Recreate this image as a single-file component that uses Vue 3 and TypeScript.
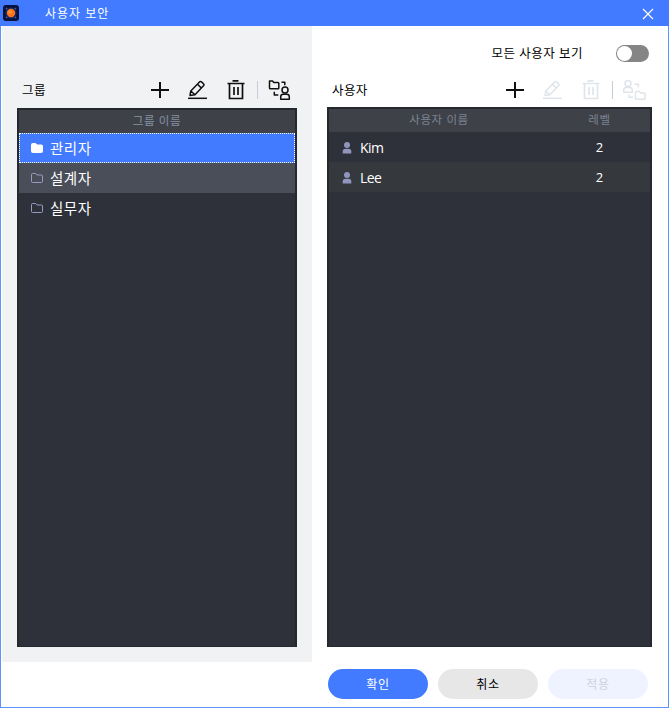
<script setup lang="ts">
import { ref } from 'vue'

interface Group { name: string; state: 'selected' | 'hover' | 'normal' }
interface User { name: string; level: number }

const groups: Group[] = [
  { name: '관리자', state: 'selected' },
  { name: '설계자', state: 'hover' },
  { name: '실무자', state: 'normal' },
]
const users: User[] = [
  { name: 'Kim', level: 2 },
  { name: 'Lee', level: 2 },
]
const showAll = ref(false)
</script>

<template>
  <svg class="defs" width="0" height="0">
    <symbol id="plus" viewBox="0 0 24 24">
      <path d="M12 4v16M3 12h18" fill="none" stroke="currentColor" stroke-width="2" />
    </symbol>
    <symbol id="pencil" viewBox="0 0 24 24">
      <g fill="none" stroke="currentColor" stroke-width="1.5" stroke-linejoin="round">
        <path d="M4 17.500l.8-4.500L13.500 3.900q1-1 2 0l2 1.900q1 1 0 2L9 16.700zM11.500 6.300l4 3.800M4.800 13L9 16.700" />
        <path d="M2 20.300h19" />
      </g>
    </symbol>
    <symbol id="trash" viewBox="0 0 24 24">
      <g fill="none" stroke="currentColor" stroke-width="1.700">
        <path d="M3.500 5.500h17M8.500 2.800h6M5.500 5.500v15h13v-15M10 9v8M14 9v8" />
      </g>
    </symbol>
    <symbol id="folder" viewBox="0 0 14 12">
      <path d="M2.500 1.500h3.200l1.300 1.500h4.500q1 0 1 1v5.500q0 1-1 1h-9q-1 0-1-1v-7q0-1 1-1z" stroke="currentColor" stroke-width="1" />
    </symbol>
  </svg>

  <div class="window">
    <header class="titlebar">
      <svg class="logo" viewBox="0 0 16 16">
        <rect width="16" height="16" rx="3" fill="#07123f" />
        <path d="M3 3l10 10M13 3L3 13" stroke="#4b5b91" stroke-width="1.500" />
        <circle cx="8" cy="8" r="5.500" fill="#152966" />
        <circle cx="8" cy="8" r="4.200" fill="#ff711b" />
        <circle cx="7.200" cy="7" r="2" fill="#ff922e" />
      </svg>
      <h1>사용자 보안</h1>
      <svg class="close" viewBox="0 0 12 12"><path d="M1 1l10 10M11 1L1 11" stroke="#fff" stroke-width="1.200" /></svg>
    </header>

    <main class="panels">
      <section class="panel groups">
        <div class="toolbar">
          <h2>그룹</h2>
          <svg class="icon"><use href="#plus" /></svg>
          <svg class="icon"><use href="#pencil" /></svg>
          <svg class="icon"><use href="#trash" /></svg>
          <i class="divider" />
          <svg class="icon swap" viewBox="0 0 24 24" fill="none" stroke="currentColor" stroke-width="1.500" stroke-linejoin="round">
            <path d="M2.500 3h3l1.300 1.500h4.200q.8 0 .8.800v4.600q0 .8-.8.800H3.300q-.8 0-.8-.8zM14.500 4.200h3.300v3.100M7.300 13.800v3.200h4" />
            <circle cx="18" cy="12" r="3" /><path d="M13.700 21.200v-2.200q0-2.700 2.500-2.700h3.600q2.500 0 2.500 2.700v2.200z" />
          </svg>
        </div>
        <div class="table">
          <div class="head"><b>그룹 이름</b></div>
          <div v-for="g in groups" :key="g.name" class="row" :class="g.state">
            <svg class="folder" viewBox="0 0 14 12"><use href="#folder" /></svg>
            <span class="name">{{ g.name }}</span>
          </div>
        </div>
      </section>

      <section class="panel users">
        <label class="show-all" @click="showAll = !showAll">
          <span>모든 사용자 보기</span>
          <i class="switch" :class="{ on: showAll }" />
        </label>
        <div class="toolbar">
          <h2>사용자</h2>
          <svg class="icon"><use href="#plus" /></svg>
          <svg class="icon disabled"><use href="#pencil" /></svg>
          <svg class="icon disabled"><use href="#trash" /></svg>
          <i class="divider" />
          <svg class="icon swap disabled" viewBox="0 0 24 24" fill="none" stroke="currentColor" stroke-width="1.500" stroke-linejoin="round">
            <circle cx="6" cy="5.500" r="3" /><path d="M1.700 14.300v-2q0-2.700 2.500-2.700h3.600q2.500 0 2.500 2.700v2zM12.500 6.200h3.800v3.100M6.800 16.500v2.700h4.500" />
            <path d="M14.300 13.500h3l1.300 1.500h3.700q.8 0 .8.800v4.600q0 .8-.8.800h-8q-.8 0-.8-.8v-6.100q0-.8.8-.8z" />
          </svg>
        </div>
        <div class="table">
          <div class="head"><span>사용자 이름</span><span class="level">레벨</span></div>
          <div v-for="u in users" :key="u.name" class="row">
            <svg class="person" viewBox="0 0 10 12"><circle cx="5" cy="3" r="3" /><path d="M.7 11.500V9.500q0-2.700 2.800-2.700h3q2.800 0 2.800 2.700v2z" /></svg>
            <span class="name">{{ u.name }}</span>
            <span class="level">{{ u.level }}</span>
          </div>
        </div>
      </section>
    </main>

    <footer class="actions">
      <button class="primary">확인</button>
      <button>취소</button>
      <button class="apply" disabled>적용</button>
    </footer>
  </div>
</template>

<style>
body { margin: 0; }
</style>

<style scoped>
.defs { display: block; height: 0; }
.window {
  box-sizing: border-box; width: 669px; height: 708px;
  display: flex; flex-direction: column;
  border: 1px solid #5b94ff; border-top: 0; background: #fff;
  font: 13px/20px "Open Sans", "Noto Sans CJK KR", sans-serif; color: #000;
}
h1, h2 { margin: 0; font-size: 13px; font-weight: 400; }
.titlebar { flex: none; height: 26px; margin: 0 -1px; display: flex; align-items: center; background: #427bff; color: #fff; }
.logo { width: 16px; height: 16px; margin-left: 3px; }
h1 { margin-left: 26px; font-size: 12px; letter-spacing: 1px; padding-top: 1px; }
.close { width: 12px; height: 12px; margin: 1px 15px 0 auto; }
.panels { display: flex; flex: none; height: 636px; }
.panel { box-sizing: border-box; display: flex; flex-direction: column; }
.groups { width: 310px; margin-left: 1px; padding: 52px 15px 15px; background: #f1f2f4; }
.users { width: 341px; padding: 15px 1px 15px 15px; }
.show-all { height: 24px; margin-right: 3px; display: flex; justify-content: flex-end; align-items: center; gap: 33px; font-size: 12.500px; letter-spacing: .5px; }
.show-all span { padding-top: 2px; }
.switch { width: 33px; height: 17px; border-radius: 9px; background: #858585; display: flow-root; }
.switch::before { content: ""; display: block; width: 15px; height: 15px; margin: 1px; border-radius: 50%; background: #fff; }
.switch.on { background: #427bff; }
.switch.on::before { margin-left: 17px; }
.toolbar { height: 24px; display: flex; align-items: center; }
.groups .toolbar { margin-bottom: 6px; }
.users .toolbar { margin: 13px 0 5px; }
.toolbar h2 { margin: 0 auto 0 5px; padding-top: 2px; font-size: 12.500px; letter-spacing: .4px; }
.icon { width: 24px; height: 24px; flex: none; margin-right: 14px; color: #111; }
.divider { width: 1px; height: 18px; margin: 0 9px 0 -5px; background: #c4ccd8; }
.icon.swap { margin-right: 6px; }
.icon.disabled { color: #dfe5eb; }
.table { flex: 1; border: 2px solid #25282c; background: #2e3139; border-bottom-width: 1px; }
.head { box-sizing: border-box; height: 23px; padding-bottom: 2px; background: #3e4147; color: #7b8495; display: flex; align-items: center; justify-content: center; font-size: 11.500px; letter-spacing: .6px; }
.head b { font-weight: 500; }
.row { box-sizing: border-box; height: 30px; display: flex; align-items: center; color: #fff; }
.row .name { font-size: 14.500px; letter-spacing: .5px; padding-top: 2px; }
.folder { width: 14px; height: 12px; margin: 0 6px 0 11px; color: #969bc4; fill: none; }
.selected { background: #427bff; border: 1px dotted #fff; }
.selected .folder { color: #fff; fill: #fff; margin-left: 10px; }
.hover { background: #4a4e59; }
.users .head > span:first-child { width: 220px; text-align: center; }
.users .level { width: 101px; text-align: center; }
.users .row .name { flex: 1; font-size: 14px; letter-spacing: -.6px; padding-top: 2px; }
.users .row:nth-child(odd) { background: #35383d; }
.person { width: 10px; height: 12px; margin: 1px 8px 0 13px; fill: #9195bd; }
.actions { display: flex; justify-content: flex-end; gap: 10px; padding: 7px 20px 0 0; }
button { width: 100px; height: 30px; border: 0; border-radius: 15px; padding: 2px 0 0; background: #e7e7e7; font: inherit; font-size: 12px; letter-spacing: .6px; color: #000; }
.primary { background: #427bff; color: #fff; }
.apply { background: #eef3ff; color: #cfd3df; }
</style>
